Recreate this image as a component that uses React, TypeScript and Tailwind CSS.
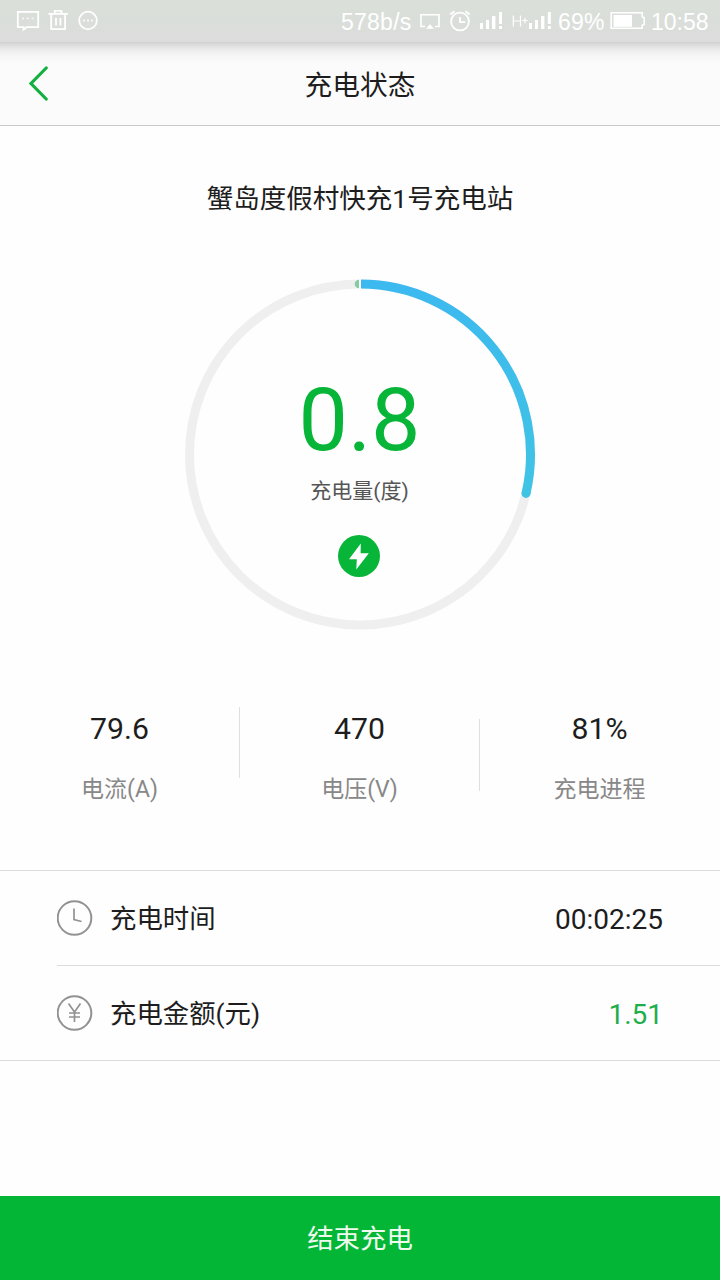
import type { ReactNode } from "react";

const RADIUS = 170.5;

function StatusBar() {
  return (
    <div className="flex h-[42px] shrink-0 items-center justify-between bg-linear-to-b from-[#dae0d9] via-[#dadeda] via-50% to-[#dcdcdc] font-['Liberation_Sans',sans-serif] text-[23px] leading-none text-white">
      <svg className="block h-[42px] w-[110px]" viewBox="0 0 110 42" fill="none" stroke="currentColor" strokeWidth="1.8">
        <path d="M17.8 11.8h20.4v15.4H26.5L23.5 29.7V27.2H17.8z" />
        <path d="M22 18.5h2M26.8 18.5h2M31.6 18.5h2" strokeWidth="1.6" opacity=".8" />
        <path d="M48.5 13.8h19.5M54.8 13.5v-2.7h6.6v2.7M51.2 14v15.2h13.9V14M56 18v7.5M60.4 18v7.5" />
        <circle cx="88" cy="20.5" r="8.8" />
        <path d="M83 20.5h2M87 20.5h2M91 20.5h2" strokeWidth="1.8" opacity=".8" />
      </svg>
      <div className="flex h-full items-center pr-[11px]">
        <span className="w-[78px] whitespace-nowrap pt-[2px] tracking-[0.25px]">578b/s</span>
        <svg className="block h-[42px] w-[139px]" viewBox="419 0 139 42" fill="none" stroke="currentColor">
          <path d="M425 26.5h-4V14.8h18v11.7h-4" strokeWidth="1.6" />
          <path d="M426 28.7l4-4.5 4 4.5z" fill="currentColor" stroke="none" />
          <circle cx="460" cy="21.5" r="8.9" strokeWidth="1.8" />
          <path d="M460 17v5.2h5.2M450.3 14.5l4.2-3.3M469.7 14.5l-4.2-3.3" strokeWidth="1.8" />
          <g fill="currentColor" stroke="none">
            <path d="M480 23h3v6h-3zM486 20h3v9h-3zM492 16h3.4v13H492zM499 12h3v12h-3zM499 26h3v3h-3z" />
            <path d="M529 23h3v6h-3zM535 20h3v9h-3zM541 16h3.4v13H541zM547.8 12h3v12h-3zM547.8 26h3v3h-3z" />
          </g>
          <path d="M513.3 15.5v11M520.5 15.5v11M513.3 21h7.2M522.3 20.5h5.4M525 17.8v5.4" strokeWidth="1.2" />
        </svg>
        <span className="w-[52px] whitespace-nowrap pt-[2px] tracking-[0.25px]">69%</span>
        <svg className="block h-[42px] w-[41px]" viewBox="610 0 41 42" fill="none" stroke="currentColor">
          <path d="M611.2 12.8h31v4l2 1v6.5l-2 1v3h-31z" strokeWidth="1.6" />
          <path d="M613.5 15H632v11.8h-18.5z" fill="currentColor" stroke="none" />
        </svg>
        <span className="w-[58px] whitespace-nowrap pt-[2px]">10:58</span>
      </div>
    </div>
  );
}

function Header() {
  return (
    <header className="grid h-[84px] shrink-0 grid-cols-[80px_1fr_80px] items-center border-b border-[#c9c9c9] bg-[linear-gradient(to_bottom,#d0d0d0_0px,#dddddd_3px,#ececec_8px,#f6f6f6_14px,#fbfbfb_21px)]">
      <button className="flex h-full items-center pb-[2px] pl-[28px]" aria-label="返回">
        <svg className="block h-9 w-6" viewBox="0 0 24 36" fill="none" stroke="#11b03f" strokeWidth="3.2" strokeLinecap="round">
          <path d="M18.2 3L3 18.5 18.2 34" />
        </svg>
      </button>
      <h1 className="pt-[4px] text-center text-[27.7px] leading-none">充电状态</h1>
    </header>
  );
}

function Gauge() {
  const angle = (103.2 * Math.PI) / 180;
  const x = 180 + RADIUS * Math.sin(angle);
  const y = 180 - RADIUS * Math.cos(angle);
  return (
    <div className="grid h-[360px] w-[360px] self-center *:col-start-1 *:row-start-1">
      <svg viewBox="0 0.5 360 360" className="block h-[360px] w-[360px]" fill="none">
        <defs>
          <linearGradient id="arc" x1="0" y1="0" x2="0" y2="1">
            <stop offset="0" stopColor="#3cb9ef" />
            <stop offset="1" stopColor="#40c4e4" />
          </linearGradient>
        </defs>
        <circle cx="180" cy="180" r={RADIUS} stroke="#efefef" strokeWidth="9" />
        <path d="M179 5.2a4.3 4.3 0 0 0 0 8.6z" fill="#88cba0" />
        <path d="M180 4.5v10" stroke="#fff" strokeWidth="2" />
        <path d={`M181 9.5A${RADIUS} ${RADIUS} 0 0 1 ${x} ${y}`} stroke="url(#arc)" strokeWidth="9" />
        <circle cx={x} cy={y} r="4.5" fill="#40c4e4" />
      </svg>
      <div className="flex flex-col items-center pr-px pt-[101px]">
        <span className="text-[88px] leading-[88px] text-[#07b538]">0.8</span>
        <span className="mt-[16px] text-[21px] leading-[22px] text-[#555]">充电量(度)</span>
        <svg className="mr-px mt-[33px] block h-[42px] w-[42px]" viewBox="0 0 42 42">
          <circle cx="21" cy="21" r="21" fill="#07b538" />
          <path d="M22.8 8.5L11 24.3h7.8L18.3 34.5 30.8 18.2h-8.2z" fill="#fff" />
        </svg>
      </div>
    </div>
  );
}

function Stat({ value, label }: { value: string; label: string }) {
  return (
    <div className="flex flex-1 flex-col items-center">
      <span className="text-[30.2px] leading-[32px]">{value}</span>
      <span className="mt-[33px] text-[23px] leading-[24px] text-[#888]">{label}</span>
    </div>
  );
}

function Row({ icon, label, children }: { icon: ReactNode; label: string; children: ReactNode }) {
  return (
    <div className="flex h-[94px] items-center pr-[57px]">
      <svg className="block h-9 w-9" viewBox="0.5 0 36 36" fill="none" stroke="#929292" strokeWidth="1.7">
        <circle cx="18" cy="18" r="16.8" strokeWidth="2" />
        {icon}
      </svg>
      <span className="ml-[17px] flex-1 pt-[3px] text-[26.4px] leading-none">{label}</span>
      {children}
    </div>
  );
}

export default function App() {
  return (
    <div className="flex h-[1280px] w-[720px] flex-col overflow-hidden bg-[#fefefe] font-[Roboto,'Noto_Sans_CJK_SC',sans-serif] text-[#1d1d1d]">
      <StatusBar />
      <Header />
      <main className="flex flex-1 flex-col">
        <h2 className="mt-[59px] text-center text-[26.5px] leading-[28px]">蟹岛度假村快充1号充电站</h2>
        <div className="mt-[62px] flex flex-col">
          <Gauge />
        </div>
        <section className="mt-[72px] flex h-[163px] items-start">
          <div className="flex h-[71px] w-[240px] border-r border-[#dfdfdf] pt-[6px]">
            <Stat value="79.6" label="电流(A)" />
          </div>
          <div className="mt-[12px] flex h-[72px] w-[240px] border-r border-[#dfdfdf]">
            <div className="-mt-[6px] flex flex-1">
              <Stat value="470" label="电压(V)" />
            </div>
          </div>
          <div className="flex w-[239px] pt-[6px]">
            <Stat value="81%" label="充电进程" />
          </div>
        </section>
        <section className="h-[191px] border-y border-[#dcdcdc] pl-[57px]">
          <div className="border-b border-[#dcdcdc]">
            <Row icon={<path d="M17.5 8.5v11l7.5 2" />} label="充电时间">
              <span className="pt-[3px] text-[28px] leading-none">00:02:25</span>
            </Row>
          </div>
          <Row icon={<path d="M12 8.5l6 8.5 6-8.5M18 17v10M12.5 18h11M12.5 22h11" />} label="充电金额(元)">
            <span className="pt-[3px] text-[28px] leading-none text-[#1fae4b]">1.51</span>
          </Row>
        </section>
      </main>
      <button className="h-[84px] shrink-0 bg-[#03b635] pt-[2px] text-[26.4px] leading-none text-[#f0fbf0]">结束充电</button>
    </div>
  );
}
